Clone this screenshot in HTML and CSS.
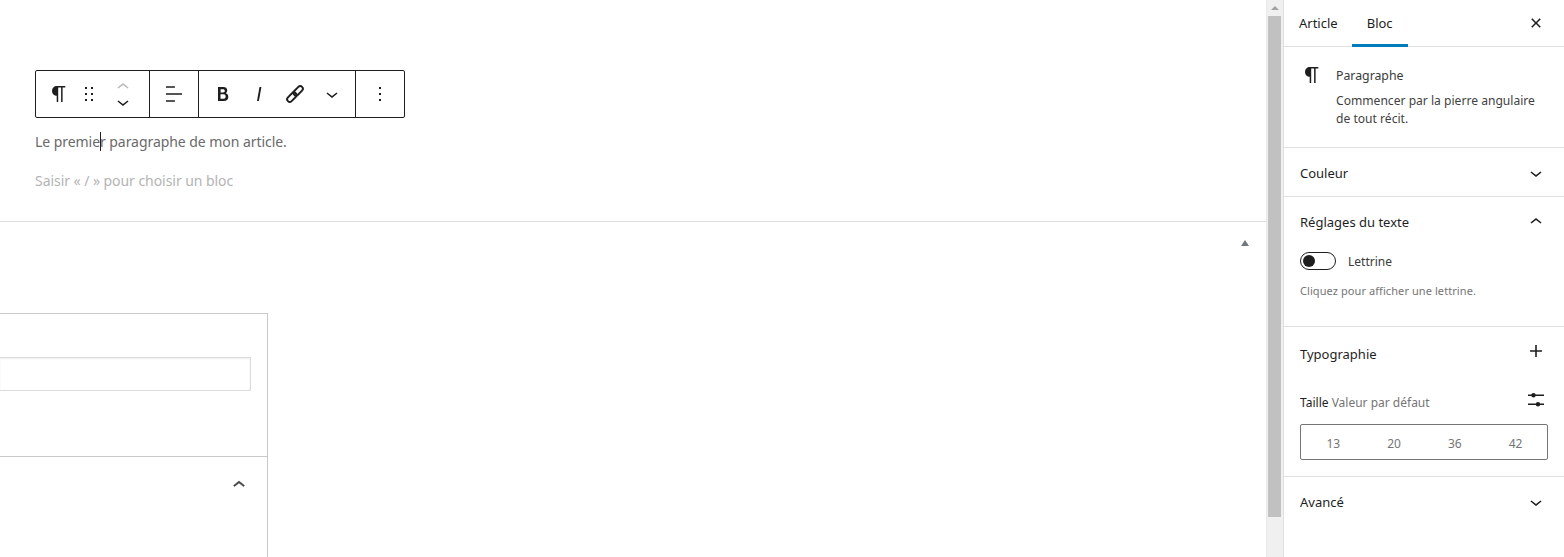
FILE: index.html
```html
<!DOCTYPE html>
<html lang="fr">
<head>
<meta charset="utf-8">
<title>Paragraphe</title>
<link rel="stylesheet" href="styles.css">
</head>
<body>
<svg class="defs" width="0" height="0" aria-hidden="true">
  <symbol id="i-down" viewBox="0 0 24 24"><path d="M17.500 11.600L12 16l-5.500-4.400.9-1.200L12 14l4.500-3.600 1 1.200z"/></symbol>
  <symbol id="i-up" viewBox="0 0 24 24"><path d="M6.500 12.400L12 8l5.500 4.400-.9 1.200L12 10l-4.500 3.600-1-1.200z"/></symbol>
  <symbol id="i-para" viewBox="0 0 24 24"><path d="M18.300 4H9.900v-.1l-.9.2c-2.300.4-4 2.400-4 4.800s1.700 4.400 4 4.800l.7.1V20h1.500V5.500h2.900V20h1.500V5.500h2.700V4z"/></symbol>
</svg>
<div class="app">
  <main class="editor">
    <div class="canvas">
      <div class="toolbar">
        <div class="tb-group tb-first">
          <svg class="ic tb-para"><use href="#i-para"/></svg>
          <svg class="ic tb-drag" viewBox="0 0 24 24"><path d="M8 7h2V5H8v2zm0 6h2v-2H8v2zm0 6h2v-2H8v2zm6-14v2h2V5h-2zm0 8h2v-2h-2v2zm0 6h2v-2h-2v2z"/></svg>
          <div class="movers">
            <svg class="ic mover mover-off"><use href="#i-up"/></svg>
            <svg class="ic mover"><use href="#i-down"/></svg>
          </div>
        </div>
        <div class="tb-group tb-align">
          <svg class="ic" viewBox="0 0 24 24"><path d="M4 19.800h8.900v-1.500H4v1.500zm8.900-15.600H4v1.500h8.900V4.200zM4 12.700h16v-1.500H4v1.500z"/></svg>
        </div>
        <div class="tb-group tb-format">
          <svg class="ic" viewBox="0 0 24 24"><path d="M14.700 11.300c1-.6 1.500-1.600 1.500-3 0-2.300-1.300-3.400-4-3.400H7v14h5.800c1.400 0 2.500-.3 3.300-1 .8-.7 1.200-1.700 1.200-2.900.1-1.900-.8-3.100-2.600-3.700zm-5.100-4h2.300c.6 0 1.100.1 1.400.4.3.3.5.7.5 1.200s-.2 1-.5 1.200c-.3.3-.8.4-1.400.4H9.600V7.300zm4.600 9c-.4.300-1 .4-1.700.4h-3v-4.400h3c1.400 0 2.100.7 2.100 2.200 0 .8-.1 1.400-.4 1.800z"/></svg>
          <svg class="ic" viewBox="0 0 24 24"><path d="M12.500 5L10 19h1.900l2.500-14z"/></svg>
          <svg class="ic" viewBox="0 0 24 24"><g transform="rotate(-45 12 12)" fill="none" stroke="#1e1e1e" stroke-width="1.900"><rect x="2" y="9.400" width="11" height="5.200" rx="2.600"/><rect x="11" y="9.400" width="11" height="5.200" rx="2.600"/></g></svg>
          <svg class="ic tb-chev"><use href="#i-down"/></svg>
        </div>
        <div class="tb-group tb-more">
          <svg class="ic" viewBox="0 0 24 24"><path d="M13 19h-2v-2h2v2zm0-6h-2v-2h2v2zm0-6h-2V5h2v2z"/></svg>
        </div>
      </div>
      <p class="para">Le premi<span class="caret">e</span>r paragraphe de mon article.</p>
      <p class="placeholder">Saisir « / » pour choisir un bloc</p>
    </div>
    <div class="meta-area">
      <div class="meta-toggle"><span class="tri"></span></div>
      <div class="meta-box">
        <div class="meta-top"><div class="meta-input"></div></div>
        <div class="meta-bottom">
          <svg class="ic meta-chev"><use href="#i-up"/></svg>
        </div>
      </div>
    </div>
  </main>
  <div class="scrollbar">
    <span class="sb-arrow"></span>
    <div class="sb-thumb"></div>
  </div>
  <aside class="sidebar">
    <div class="tabs">
      <span class="tab">Article</span>
      <span class="tab tab-on">Bloc</span>
      <svg class="ic tab-close" viewBox="0 0 24 24"><path d="M12 13.060l3.712 3.713 1.061-1.060L13.061 12l3.712-3.712-1.060-1.060L12 10.938 8.288 7.227l-1.061 1.060L10.939 12l-3.712 3.712 1.060 1.061L12 13.061z"/></svg>
    </div>
    <section class="card">
      <svg class="ic card-icon"><use href="#i-para"/></svg>
      <div class="card-body">
        <h2 class="card-title">Paragraphe</h2>
        <p class="card-desc">Commencer par la pierre angulaire de tout récit.</p>
      </div>
    </section>
    <section class="panel panel-color">
      <div class="panel-head"><span class="panel-title">Couleur</span><svg class="ic"><use href="#i-down"/></svg></div>
    </section>
    <section class="panel panel-text">
      <div class="panel-head"><span class="panel-title">Réglages du texte</span><svg class="ic"><use href="#i-up"/></svg></div>
      <div class="toggle-row"><span class="toggle"><span class="knob"></span></span><span class="toggle-label">Lettrine</span></div>
      <p class="help">Cliquez pour afficher une lettrine.</p>
    </section>
    <section class="panel panel-typo">
      <div class="panel-head"><span class="panel-title">Typographie</span><svg class="ic plus" viewBox="0 0 24 24"><path d="M18 11.200h-5.200V6h-1.600v5.200H6v1.600h5.200V18h1.600v-5.200H18z"/></svg></div>
      <div class="size-head">
        <span class="size-label">Taille <span class="size-value">Valeur par défaut</span></span>
        <svg class="ic" viewBox="0 0 24 24"><path d="M4 4.500h16V6H4zM4 13.500h16V15H4z"/><circle cx="9.500" cy="5.200" r="2.200"/><circle cx="14" cy="14.200" r="2.200"/></svg>
      </div>
      <div class="sizes"><span>13</span><span>20</span><span>36</span><span>42</span></div>
    </section>
    <section class="panel panel-adv">
      <div class="panel-head"><span class="panel-title">Avancé</span><svg class="ic"><use href="#i-down"/></svg></div>
    </section>
  </aside>
</div>
</body>
</html>
```

FILE: styles.css
```css
* { box-sizing: border-box; }
html, body { margin: 0; height: 100%; overflow: hidden; background: #fff; }
body { font-family: "Noto Sans", "Open Sans", sans-serif; color: #1e1e1e; font-size: 13px; }
.defs { display: block; height: 0; }
.app { display: flex; height: 557px; }
.ic { width: 24px; height: 24px; fill: #1e1e1e; flex: none; display: block; }

.editor { width: 1266px; flex: none; display: flex; flex-direction: column; background: #fff; }
.canvas { height: 222px; padding: 70px 0 0 35px; border-bottom: 1px solid #dcdcde; }
.toolbar { display: flex; width: 370px; height: 48px; border: 1px solid #1e1e1e; border-radius: 2px; background: #fff; }
.tb-group { display: flex; align-items: center; border-right: 1px solid #1e1e1e; height: 100%; }
.tb-group:last-child { border-right: 0; }
.tb-first { width: 114px; padding-left: 11px; }
.tb-drag { margin-left: 6px; }
.movers { display: flex; flex-direction: column; margin-left: 10px; justify-content: center; }
.mover + .mover { margin-top: -9px; }
.mover-off { fill: #b9b9b9; }
.tb-align { width: 49px; padding-left: 12px; }
.tb-format { width: 157px; padding-left: 12px; gap: 12px; }
.tb-chev { margin-left: 1px; }
.tb-more { flex: 1; padding-left: 12px; }

.para, .placeholder { margin: 0; font-size: 14px; line-height: 21px; letter-spacing: -0.055px; }
.para { margin-top: 13px; color: #6a6a6a; }
.placeholder { margin-top: 18px; color: #b4b4b4; }
.caret { box-shadow: 1px 0 0 #1e1e1e; }

.meta-area { flex: 1; min-height: 0; overflow: hidden; }
.meta-toggle { height: 91px; display: flex; justify-content: flex-end; padding: 18px 17px 0 0; }
.tri { width: 0; height: 0; border-left: 4px solid transparent; border-right: 4px solid transparent; border-bottom: 6px solid #72777c; }
.meta-box { width: 268px; border: 1px solid #c9c9c9; border-left: 0; border-bottom: 0; height: 260px; }
.meta-top { height: 143px; padding-top: 43px; border-bottom: 1px solid #c9c9c9; }
.meta-input { width: 251px; height: 34px; border: 1px solid #dcdcde; border-left: 0; box-shadow: inset 0 1px 2px rgba(0,0,0,.07); }
.meta-bottom { display: flex; justify-content: flex-end; padding: 16px 16px 0 0; }
.meta-chev { fill: #444; stroke: #444; stroke-width: .5; }

.scrollbar { width: 17px; flex: none; background: #f0f0f0; border-left: 1px solid #e9e9e9; border-right: 1px solid #f0f0f0; display: flex; flex-direction: column; align-items: center; }
.sb-arrow { width: 0; height: 0; margin: 6px 0 5px; border-left: 4px solid transparent; border-right: 4px solid transparent; border-bottom: 4px solid #a3a3a3; }
.sb-thumb { width: 13px; height: 501px; background: #c1c1c1; margin-top: 1px; }

.sidebar { flex: 1; border-left: 1px solid #e0e0e0; background: #fff; }
.tabs { display: flex; height: 47px; border-bottom: 1px solid #e0e0e0; position: relative; }
.tab { height: 47px; line-height: 47px; font-size: 13px; color: #1e1e1e; }
.tab:first-child { margin-left: 15px; }
.tab-on { margin-left: 14px; width: 56px; text-align: center; box-shadow: inset 0 -3px 0 #007cba; }
.tab-close { position: absolute; right: 16px; top: 11px; }

.card { display: flex; height: 101px; padding: 16px 16px 0 16px; border-bottom: 1px solid #e0e0e0; }
.card-body { margin-left: 12px; }
.card-title { margin: 3px 0 6px; font-size: 12.3px; line-height: 20px; font-weight: 400; color: #3a3a3a; }
.card-desc { margin: 0; font-size: 12.1px; line-height: 18px; color: #3f3f3f; width: 212px; }

.panel { padding: 0 16px; border-bottom: 1px solid #e0e0e0; }
.panel-adv { border-bottom: 0; }
.panel-head { display: flex; justify-content: space-between; align-items: center; height: 50px; }
.panel-title { font-size: 13px; color: #1e1e1e; }
.panel-color { height: 49px; }
.panel-text { height: 130px; }
.toggle-row { display: flex; align-items: center; margin-top: 4px; height: 20px; gap: 12px; }
.toggle { width: 36px; height: 18px; border: 1px solid #1e1e1e; border-radius: 9px; position: relative; display: block; }
.knob { position: absolute; left: 2px; top: 2px; width: 12px; height: 12px; border-radius: 50%; background: #1e1e1e; }
.toggle-label { font-size: 12px; color: #3a3a3a; }
.help { margin: 12px 0 0; font-size: 11px; line-height: 16px; color: #757575; letter-spacing: .08px; }
.panel-typo { height: 150px; }
.panel-typo .panel-head { height: 54px; }
.plus { position: relative; top: -3px; }
.size-head { display: flex; justify-content: space-between; align-items: center; height: 24px; margin: 9px 0 0; }
.size-label { font-size: 12px; color: #1e1e1e; }
.size-value { color: #757575; }
.sizes { display: flex; height: 36px; margin-top: 10px; width: 248px; padding: 2px 1px 0 2px; border: 1px solid #757575; border-radius: 2px; }
.sizes span { flex: 1; display: flex; align-items: center; justify-content: center; font-size: 12px; color: #757575; }
```
